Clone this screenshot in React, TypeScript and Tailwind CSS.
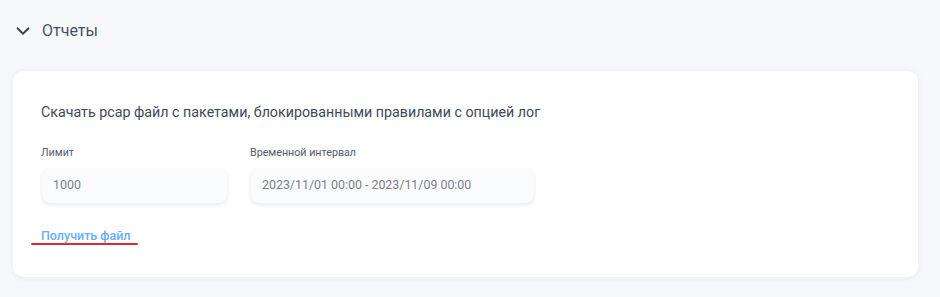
import { ChevronDown } from "lucide-react";

export default function App() {
  return (
    <div className="w-[940px] h-[297px] bg-[#f7f8fc] font-['Roboto',sans-serif] pt-[21px]">
      {/* Header */}
      <div className="flex items-center h-5 pl-[12px]">
        <ChevronDown className="size-[22px] text-[#3b4152]" strokeWidth={2} />
        <span className="ml-[8px] text-[16px] text-[#4a5064]">Отчеты</span>
      </div>

      {/* Card */}
      <div className="mt-[30px] ml-[13px] w-[905px] h-[206px] bg-white rounded-[10px] shadow-[0_1px_6px_rgba(30,40,80,0.07)] pl-[28px] pt-[31px]">
        <p className="text-[14.25px] leading-5 text-[#434857]">
          Скачать pcap файл с пакетами, блокированными правилами с опцией лог
        </p>

        <div className="flex gap-[23px] mt-[24px]">
          <div className="flex flex-col">
            <span className="text-[10.7px] leading-[14px] text-[#555a68]">Лимит</span>
            <div className="mt-[8px] ml-px w-[185px] h-[35px] rounded-[8px] bg-[#fafbfd] shadow-[0_2px_4px_rgba(30,40,80,0.1)] flex items-center pl-[11px] text-[12.4px] text-[#7a7e8a]">
              1000
            </div>
          </div>
          <div className="flex flex-col">
            <span className="text-[10.7px] leading-[14px] text-[#555a68]">Временной интервал</span>
            <div className="mt-[8px] ml-px w-[283px] h-[35px] rounded-[8px] bg-[#fafbfd] shadow-[0_2px_4px_rgba(30,40,80,0.1)] flex items-center pl-[11px] text-[12.4px] text-[#7a7e8a]">
              2023/11/01 00:00 - 2023/11/09 00:00
            </div>
          </div>
        </div>

        <div className="mt-[25px] -ml-[10px] inline-flex flex-col">
          <span className="pl-[10px] text-[12.5px] leading-[15px] font-medium text-[#68aefc]">Получить файл</span>
          <div className="mt-0 w-[107px] h-[2px] bg-[#e3262f] rounded-full" />
        </div>
      </div>
    </div>
  );
}
